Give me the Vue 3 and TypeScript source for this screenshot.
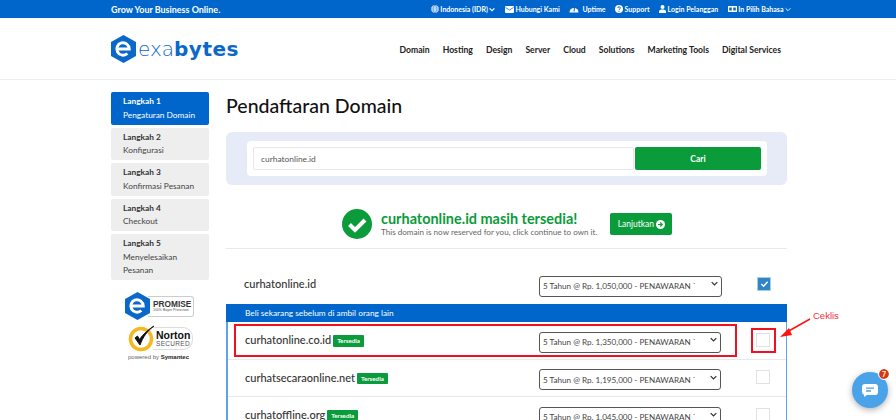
<script setup lang="ts">
const navItems: string[] = ['Domain', 'Hosting', 'Design', 'Server', 'Cloud', 'Solutions', 'Marketing Tools', 'Digital Services']
const steps = [
  { title: 'Langkah 1', sub: 'Pengaturan Domain', active: true },
  { title: 'Langkah 2', sub: 'Konfigurasi', active: false },
  { title: 'Langkah 3', sub: 'Konfirmasi Pesanan', active: false },
  { title: 'Langkah 4', sub: 'Checkout', active: false },
  { title: 'Langkah 5', sub: 'Menyelesaikan Pesanan', active: false },
]
const offers = [
  { name: 'curhatonline.co.id', price: '1,350,000' },
  { name: 'curhatsecaraonline.net', price: '1,195,000' },
  { name: 'curhatoffline.org', price: '1,045,000' },
]
</script>

<template>
  <div class="page">
    <div class="topbar">
      <div class="topbar-inner">
        <span class="tagline">Grow Your Business Online.</span>
        <div class="toplinks">
          <span class="toplink">
            <svg width="8" height="8" viewBox="0 0 16 16"><circle cx="8" cy="8" r="7.5" fill="#fff"/><path d="M0 8h16M8 0c-5 4-5 12 0 16M8 0c5 4 5 12 0 16M1.500 4h13M1.500 12h13" stroke="#06c" stroke-width="1" fill="none"/></svg>
            Indonesia (IDR)
            <svg width="6" height="5" viewBox="0 0 10 8"><path d="M1 2l4 4 4-4" stroke="#fff" stroke-width="2" fill="none"/></svg>
          </span>
          <span class="toplink">
            <svg width="9" height="7" viewBox="0 0 18 14"><rect width="18" height="14" rx="2" fill="#fff"/><path d="M1 3l8 5 8-5" stroke="#06c" stroke-width="1.500" fill="none"/></svg>
            Hubungi Kami
          </span>
          <span class="toplink wide">
            <svg width="10" height="8" viewBox="0 0 20 16"><path d="M1 15a9 9 0 1 1 18 0z" fill="#fff"/><path d="M10 13l1-8" stroke="#06c" stroke-width="2"/></svg>
            Uptime
          </span>
          <span class="toplink">
            <svg width="8" height="8" viewBox="0 0 16 16"><circle cx="8" cy="8" r="8" fill="#fff"/><path d="M5.500 6a2.500 2.500 0 1 1 3.500 2.300c-.7.4-1 .8-1 1.700M8 11.500v2" stroke="#06c" stroke-width="2" fill="none"/></svg>
            Support
          </span>
          <span class="toplink">
            <svg width="7" height="8" viewBox="0 0 14 16"><circle cx="7" cy="4" r="4" fill="#fff"/><path d="M0 16v-3c0-3 3-4 7-4s7 1 7 4v3z" fill="#fff"/></svg>
            Login Pelanggan
          </span>
          <span class="toplink">
            <svg width="9" height="6" viewBox="0 0 18 12"><rect width="18" height="12" fill="#fff"/><path d="M2.500 3h5v6h-5zM10.500 3h5v6h-5z" fill="#06c"/></svg>
            In Pilih Bahasa
            <svg width="6" height="5" viewBox="0 0 10 8"><path d="M1 2l4 4 4-4" stroke="#fff" stroke-width="1.500" fill="none"/></svg>
          </span>
        </div>
      </div>
    </div>

    <header class="header">
      <div class="header-inner">
        <div class="logo">
          <svg width="25" height="28" viewBox="0 0 26 29">
            <path d="M13 0l13 7.200v14.600L13 29 0 21.800V7.200z" fill="#0a68c9"/>
            <path d="M6.500 14.500h12.500a6.500 6.500 0 1 0-2 4.700" stroke="#fff" stroke-width="3" fill="none"/>
          </svg>
          <span class="wordmark"><span class="exa">exa</span><span class="bytes">bytes</span></span>
        </div>
        <nav class="nav">
          <a v-for="item in navItems" :key="item" class="nav-item">{{ item }}</a>
        </nav>
      </div>
    </header>

    <div class="content">
      <aside class="sidebar">
        <div v-for="s in steps" :key="s.title" class="step" :class="{ active: s.active }">
          <div class="step-title">{{ s.title }}</div>
          <div class="step-sub">{{ s.sub }}</div>
        </div>
        <div class="badge-promise">
          <svg width="25" height="28" viewBox="0 0 26 29">
            <path d="M13 0l13 7.200v14.600L13 29 0 21.800V7.200z" fill="#0a68c9"/>
            <path d="M6.500 14.500h12.500a6.500 6.500 0 1 0-2 4.700" stroke="#fff" stroke-width="3" fill="none"/>
          </svg>
          <div class="promise-box">
            <div class="promise-title">PROMISE</div>
            <div class="promise-sub">100% Buyer Protection</div>
          </div>
        </div>
        <div class="badge-norton">
          <div class="norton-main">
            <svg class="norton-mark" width="28" height="28" viewBox="0 0 28 28">
              <circle cx="13" cy="15" r="10.500" fill="#fff" stroke="#f5b820" stroke-width="3.500"/>
              <path d="M7 14l5 7 C15 13 19 7 26 2 C20 6 15 10 11.500 15.500L9.500 12z" fill="#111" stroke="#111" stroke-width="1"/>
            </svg>
            <div class="norton-box">
              <div class="norton-title">Norton</div>
              <div class="norton-sub">SECURED</div>
            </div>
          </div>
          <div class="norton-by">powered by <b>Symantec</b></div>
        </div>
      </aside>

      <main class="main">
        <h1 class="title">Pendaftaran Domain</h1>

        <section class="search-panel">
          <div class="search-inner">
            <input class="search-input" type="text" value="curhatonline.id" />
            <button class="search-btn" type="button">Cari</button>
          </div>
        </section>

        <section class="result">
          <svg width="30" height="30" viewBox="0 0 30 30">
            <circle cx="15" cy="15" r="15" fill="#0a9b3a"/>
            <path d="M7.500 15.500l5.500 5.500 10-10" stroke="#fff" stroke-width="4" fill="none"/>
          </svg>
          <div class="result-text">
            <div class="result-title">curhatonline.id masih tersedia!</div>
            <div class="result-sub">This domain is now reserved for you, click continue to own it.</div>
          </div>
          <button class="continue-btn" type="button">
            Lanjutkan
            <svg width="9" height="9" viewBox="0 0 16 16"><circle cx="8" cy="8" r="8" fill="#fff"/><path d="M3.500 8h7M7.500 4.500L11 8l-3.500 3.500" stroke="#0a9b3a" stroke-width="2.200" fill="none"/></svg>
          </button>
        </section>

        <div class="row first">
          <div class="row-name plain">curhatonline.id</div>
          <div class="select-wrap">
            <select class="select"><option>5 Tahun @ Rp. 1,050,000 - PENAWARAN `</option></select>
            <svg class="chev" width="7" height="5" viewBox="0 0 10 7"><path d="M1 1.500l4 4 4-4" stroke="#333" stroke-width="1.800" fill="none"/></svg>
          </div>
          <div class="check checked">
            <svg width="9" height="8" viewBox="0 0 10 8"><path d="M1.500 4l2.500 2.500 4.500-5" stroke="#fff" stroke-width="1.600" fill="none"/></svg>
          </div>
        </div>

        <section class="offers">
          <div class="offers-head">Beli sekarang sebelum di ambil orang lain</div>
          <div v-for="o in offers" :key="o.name" class="row offer">
            <div class="row-name">
              {{ o.name }}
              <span class="tag">Tersedia</span>
            </div>
            <div class="select-wrap narrow">
              <select class="select"><option>5 Tahun @ Rp. {{ o.price }} - PENAWARAN `</option></select>
              <svg class="chev" width="7" height="5" viewBox="0 0 10 7"><path d="M1 1.500l4 4 4-4" stroke="#333" stroke-width="1.800" fill="none"/></svg>
            </div>
            <div class="check"></div>
          </div>
        </section>
      </main>
    </div>

    <div class="mark-row"></div>
    <div class="mark-check"></div>
    <svg class="mark-arrow" width="34" height="22" viewBox="0 0 34 22">
      <path d="M31 1L8 14" stroke="#f11" stroke-width="1.500"/>
      <path d="M1 19l9-9 3 7z" fill="#f11"/>
    </svg>
    <span class="mark-label">Ceklis</span>

    <div class="chat">
      <svg width="16" height="13" viewBox="0 0 16 13">
        <path d="M3 0h10a3 3 0 0 1 3 3v5a3 3 0 0 1-3 3H5l-3 2v-2.200A3 3 0 0 1 0 8V3a3 3 0 0 1 3-3z" fill="#fff"/>
        <path d="M4 4.200h8M4 7h5" stroke="#4aa3e8" stroke-width="1.300"/>
      </svg>
      <span class="chat-count">7</span>
    </div>
  </div>
</template>

<style>
html, body { margin: 0; overflow: hidden; background: #fff; }
</style>

<style scoped>
* { box-sizing: border-box; }
.page {
  position: relative;
  width: 896px;
  height: 420px;
  overflow: hidden;
  background: #fff;
  font-family: Lato, "Liberation Sans", sans-serif;
  color: #333;
}
.topbar { height: 18px; background: #0066cc; color: #fff; }
.topbar-inner {
  margin-left: 111px;
  width: 680px;
  height: 18px;
  display: flex;
  align-items: center;
  justify-content: space-between;
}
.tagline { font-size: 8.950px; font-weight: 700; }
.toplinks { display: flex; align-items: center; gap: 9.600px; }
.toplink {
  display: inline-flex;
  align-items: center;
  gap: 1.500px;
  font-size: 7px;
  font-weight: 700;
  white-space: nowrap;
}
.toplink.wide { gap: 3px; }
.header { height: 62px; border-bottom: 1px solid #eee; }
.header-inner {
  margin-left: 111px;
  width: 670px;
  height: 61px;
  display: flex;
  align-items: center;
  justify-content: space-between;
  padding-top: 1px;
}
.logo { display: flex; align-items: center; gap: 2px; }
.wordmark { font-family: "DejaVu Sans", sans-serif; font-size: 20px; color: #0a68c9; line-height: 1; }
.exa { font-weight: 300; }
.bytes { font-weight: 700; letter-spacing: .5px; }
.nav { display: flex; gap: 13px; }
.nav-item { font-size: 8.650px; font-weight: 700; color: #222; white-space: nowrap; }
.content {
  margin-left: 111px;
  width: 676px;
  display: flex;
  gap: 17px;
  padding-top: 12px;
}
.sidebar { width: 98px; flex: none; display: flex; flex-direction: column; gap: 3px; }
.step {
  background: #eeeeee;
  border-radius: 2px;
  padding: 3px 12px 2.500px;
  font-size: 8.300px;
  line-height: 13.500px;
  color: #444;
}
.step.active { background: #0066cc; color: #fff; }
.step-title { font-weight: 700; color: #333; }
.step.active .step-title { color: #fff; }
.badge-promise { display: flex; align-items: center; margin: 9px 0 0 14px; }
.promise-box {
  margin-left: -2px;
  border: 1px solid #ccc;
  border-left: none;
  border-radius: 0 3px 3px 0;
  height: 21px;
  padding: 3px 2px 0 5px;
  line-height: 1;
}
.promise-title { font-family: "Liberation Sans", sans-serif; font-size: 8.300px; font-weight: 700; color: #333; }
.promise-sub { font-family: "Liberation Sans", sans-serif; font-size: 3.500px; color: #555; margin-top: 1px; }
.badge-norton { margin: 1px 0 0 17px; }
.norton-main { display: flex; align-items: flex-start; }
.norton-mark { flex: none; }
.norton-box {
  margin-left: -3px;
  margin-top: 3px;
  height: 23px;
  width: 40px;
  border: 1px solid #ddd;
  border-left: none;
  border-radius: 0 10px 10px 0;
  padding-left: 3px;
  font-family: "Liberation Sans", sans-serif;
  line-height: 1;
}
.norton-title { font-size: 10.500px; font-weight: 700; color: #111; margin-top: 2px; }
.norton-sub { font-size: 6.500px; color: #555; letter-spacing: .3px; }
.norton-by { font-family: "Liberation Sans", sans-serif; font-size: 6px; color: #666; white-space: nowrap; line-height: 1; margin-top: 2px; }
.norton-by b { color: #222; }
.main { flex: 1; min-width: 0; }
.title { margin: 0; height: 28px; font-size: 19.500px; line-height: 28px; font-weight: 500; color: #111; }
.search-panel {
  margin-top: 12px;
  height: 53px;
  background: #e6ebf7;
  border-radius: 6px;
  padding: 9px 20px 9px 21px;
}
.search-inner {
  background: #fff;
  border-radius: 4px;
  height: 35px;
  padding: 6px 6px;
  display: flex;
  gap: 1px;
}
.search-input {
  flex: 1;
  min-width: 0;
  border: 1px solid #e8e8e8;
  border-radius: 2px;
  padding: 0 7px;
  font: 8.400px Lato, sans-serif;
  color: #555;
  outline: none;
}
.search-btn {
  width: 126px;
  border: none;
  border-radius: 2px;
  background: #0a9b3a;
  color: #fff;
  font: 700 8.500px Lato, sans-serif;
}
.result {
  height: 64px;
  border-bottom: 1px solid #e8e8e8;
  display: flex;
  align-items: center;
  padding-left: 116px;
  padding-top: 16px;
  padding-bottom: 1px;
}
.result-text { margin-left: 9px; }
.result-title { font-size: 14.450px; font-weight: 700; color: #0a9b3a; line-height: 17px; }
.result-sub { font-size: 8.100px; color: #666; line-height: 11px; white-space: nowrap; }
.continue-btn {
  margin-left: 13px;
  width: 62px;
  height: 22px;
  border: none;
  border-radius: 2px;
  background: #0a9b3a;
  color: #fff;
  font: 8.500px Lato, sans-serif;
  display: flex;
  align-items: center;
  justify-content: center;
  gap: 2px;
  padding: 0;
}
.row { display: flex; align-items: center; }
.row.first { height: 55px; padding: 14px 15px 0 18px; }
.row-name {
  width: 294px;
  flex: none;
  font-size: 11px;
  font-weight: 500;
  color: #333;
  display: flex;
  align-items: center;
  gap: 2px;
  white-space: nowrap;
}
.row-name.plain { width: 295px; }
.select-wrap { position: relative; width: 183px; height: 21px; flex: none; }
.select-wrap.narrow { width: 182px; }
.select {
  width: 100%;
  height: 100%;
  appearance: none;
  border: 1px solid #555;
  border-radius: 3px;
  background: #fff;
  padding: 0 16px 0 3px;
  font: 8.150px Lato, sans-serif;
  color: #444;
  outline: none;
}
.chev { position: absolute; right: 4px; top: 8px; }
.check {
  margin-left: 35px;
  width: 14px;
  height: 14px;
  flex: none;
  border: 1px solid #e2e2e2;
  background: #fff;
  display: flex;
  align-items: center;
  justify-content: center;
}
.check.checked { background: #2f86c4; border-color: #a8cde6; }
.offers {
  border: 1px solid #5fa3e8;
  border-top: none;
  border-bottom: none;
  border-left-width: 2px;
}
.offers-head {
  margin: 0 -1px 0 -2px;
  height: 18px;
  background: #0066cc;
  color: #fff;
  font-size: 8.300px;
  line-height: 18px;
  padding-left: 19px;
}
.offer { height: 37.500px; padding-left: 17px; padding-bottom: 1px; border-bottom: 1px solid #e8e8e8; }
.tag {
  background: #0a9b3a;
  color: #fff;
  font-size: 6.200px;
  font-weight: 700;
  padding: 2px 4px;
  border-radius: 1px;
  line-height: 7.500px;
  margin-top: 2px;
}
.mark-row {
  position: absolute;
  left: 234px;
  top: 324px;
  width: 503px;
  height: 33px;
  border: 2px solid #f01020;
}
.mark-check {
  position: absolute;
  left: 751px;
  top: 328px;
  width: 25px;
  height: 25px;
  border: 2px solid #f01020;
}
.mark-arrow { position: absolute; left: 779px; top: 318px; }
.mark-label {
  position: absolute;
  left: 813px;
  top: 310px;
  font-family: "Liberation Sans", sans-serif;
  font-size: 9.500px;
  color: #f03040;
}
.chat {
  position: absolute;
  left: 852px;
  top: 372px;
  width: 36px;
  height: 36px;
  border-radius: 50%;
  background: #4aa3e8;
  box-shadow: 0 2px 6px rgba(0, 0, 0, .3);
  display: flex;
  align-items: center;
  justify-content: center;
}
.chat-count {
  position: absolute;
  right: -1px;
  top: -3px;
  width: 10px;
  height: 10px;
  border-radius: 50%;
  background: #d9380f;
  outline: 1px solid #fff;
  color: #fff;
  font-size: 7px;
  font-weight: 700;
  line-height: 10px;
  text-align: center;
}
</style>
